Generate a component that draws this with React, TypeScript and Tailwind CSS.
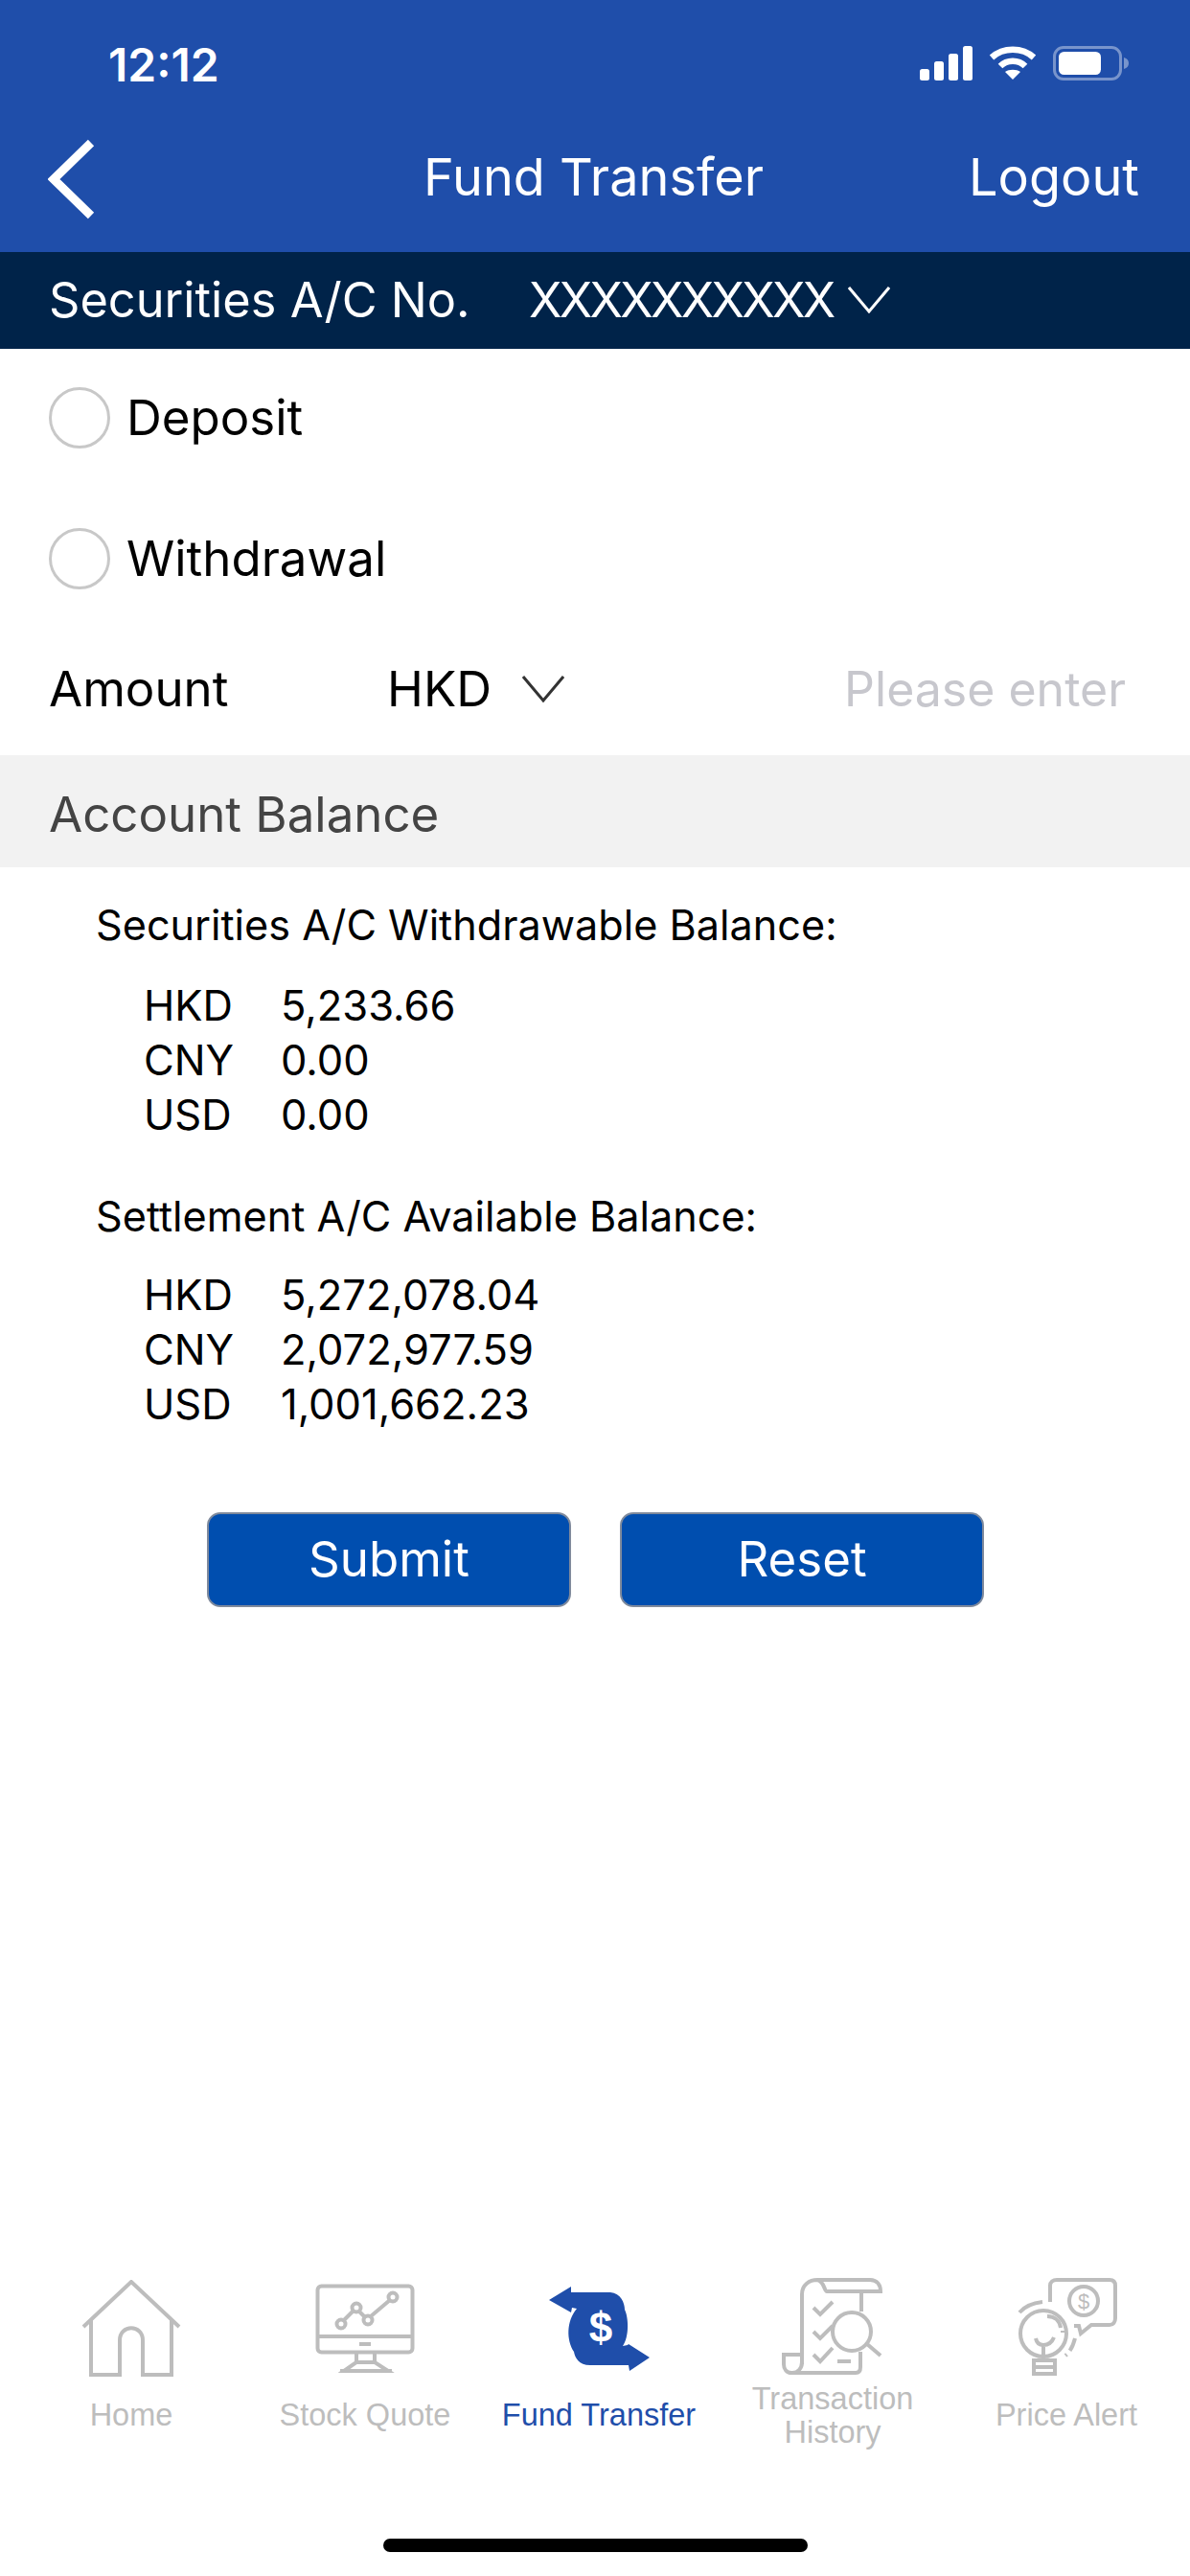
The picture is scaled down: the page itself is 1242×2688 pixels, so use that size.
const SANS = "font-['Inter','Liberation_Sans',sans-serif]";

function Chevron({ w, h, color }: { w: number; h: number; color: string }) {
  return (
    <svg width={w} height={h} viewBox="0 0 44 28" fill="none">
      <path d="M1 1 L22 26 L43 1" stroke={color} strokeWidth="3" />
    </svg>
  );
}

function Row({ cur, val }: { cur: string; val: string }) {
  return (
    <div className="flex h-[57px] items-center text-[43.5px] text-black">
      <span className="w-[143px]">{cur}</span>
      <span>{val}</span>
    </div>
  );
}

function Radio({ label }: { label: string }) {
  return (
    <div className="flex h-[64px] items-center gap-[17px]">
      <div className="size-[64px] rounded-full border-[3px] border-[#c8c8c8]" />
      <span className="text-[51px] leading-[64px] text-black">{label}</span>
    </div>
  );
}

function Tab({ label, active, children }: { label: string; active?: boolean; children: React.ReactNode }) {
  return (
    <div className="flex flex-col items-center">
      <div className="flex h-[104px] items-center justify-center">{children}</div>
      <div className={`mt-[4px] flex h-[70px] items-start justify-center text-center text-[32.5px] leading-[35px] font-['Liberation_Sans',sans-serif] ${active ? "text-[#1f4eaa]" : "text-[#bdbdbd]"}`}>
        <span className={label.length > 14 ? "" : "pt-[17px]"}>{label}</span>
      </div>
    </div>
  );
}

const G = "#bdbdbd";

export default function App() {
  return (
    <div className={`flex h-[2688px] w-[1242px] flex-col bg-white ${SANS}`}>
      <header className="h-[263px] shrink-0 bg-[#1f4eaa] text-white">
        <div className="flex h-[136px] items-start justify-between pt-[43px] pl-[113px] pr-[64px]">
          <span className="text-[48px] leading-[50px] font-semibold">12:12</span>
          <div className="flex items-center gap-[17px] pt-[5px]">
            <svg width="55" height="36" viewBox="0 0 55 36" fill="white">
              <rect x="0" y="24" width="10" height="12" rx="2.5" />
              <rect x="15" y="16" width="10" height="20" rx="2.5" />
              <rect x="30" y="8" width="10" height="28" rx="2.5" />
              <rect x="45" y="0" width="10" height="36" rx="2.5" />
            </svg>
            <svg width="50" height="36" viewBox="0 0 50 36" fill="none" stroke="white" strokeWidth="6.5">
              <path d="M3 12 C15 1 35 1 47 12" />
              <path d="M12 21 C19 14 31 14 38 21" />
              <path d="M25 35 L17 27 C21 24 29 24 33 27 Z" fill="white" stroke="none" />
            </svg>
            <svg width="79" height="36" viewBox="0 0 79 36" fill="none">
              <rect x="1.5" y="1.5" width="69" height="33" rx="9.5" stroke="white" strokeOpacity="0.4" strokeWidth="3" />
              <rect x="6" y="6" width="44" height="24" rx="5.5" fill="white" />
              <path d="M74 12 C77.5 13 79 15 79 18 C79 21 77.5 23 74 24 Z" fill="white" fillOpacity="0.4" />
            </svg>
          </div>
        </div>
        <div className="flex h-[127px] items-start pl-[50px] pr-[53px]">
          <div className="flex-1">
            <svg width="50" height="84" viewBox="0 0 50 84" fill="none" className="mt-[9px]">
              <path d="M45 4 L6 42 L45 80" stroke="white" strokeWidth="9" />
            </svg>
          </div>
          <span className="mt-[19px] text-[54px] leading-[60px]">Fund Transfer</span>
          <div className="flex flex-1 justify-end">
            <span className="mt-[19px] text-[54px] leading-[60px]">Logout</span>
          </div>
        </div>
      </header>

      <div className="flex h-[101px] shrink-0 items-center bg-[#002349] pb-[2px] pl-[51px] text-[50.5px] text-white">
        <span className="w-[501px]">Securities A/C No.</span>
        <span className="tracking-[-2.7px]">XXXXXXXXXX</span>
        <span className="ml-[16px]"><Chevron w={44} h={28} color="white" /></span>
      </div>

      <div className="flex h-[424px] shrink-0 flex-col px-[51px]">
        <div className="mt-[40px]"><Radio label="Deposit" /></div>
        <div className="mt-[83px]"><Radio label="Withdrawal" /></div>
        <div className="mt-[72px] flex h-[64px] items-center text-[51px] leading-[64px] text-black">
          <span className="w-[353px]">Amount</span>
          <span>HKD</span>
          <span className="ml-[32px]"><Chevron w={44} h={28} color="#333333" /></span>
          <span className="ml-auto pr-[16px] text-[50px] text-[#c7c7cd]">Please enter</span>
        </div>
      </div>

      <div className="flex h-[117px] shrink-0 items-center bg-[#f2f2f2] pl-[51px] pt-[8px] text-[51px] text-[#444444]">Account Balance</div>

      <div className="flex shrink-0 flex-col pl-[100px] pt-[32px]">
        <div className="text-[43.2px] leading-[57px] text-black">Securities A/C Withdrawable Balance:</div>
        <div className="mt-[27px] pl-[50px]">
          <Row cur="HKD" val="5,233.66" />
          <Row cur="CNY" val="0.00" />
          <Row cur="USD" val="0.00" />
        </div>
        <div className="mt-[49px] text-[43.2px] leading-[57px] text-black">Settlement A/C Available Balance:</div>
        <div className="mt-[25px] pl-[50px]">
          <Row cur="HKD" val="5,272,078.04" />
          <Row cur="CNY" val="2,072,977.59" />
          <Row cur="USD" val="1,001,662.23" />
        </div>
      </div>

      <div className="mt-[84px] flex shrink-0 justify-center gap-[51px] pl-[1px]">
        <button className="h-[99px] w-[380px] rounded-[14px] border-2 border-[#7f8a9c] bg-[#004eaf] text-[51px] text-white">Submit</button>
        <button className="h-[99px] w-[380px] rounded-[14px] border-2 border-[#7f8a9c] bg-[#004eaf] text-[51px] text-white">Reset</button>
      </div>

      <nav className="mt-auto grid shrink-0 grid-cols-5 pl-[15px] pr-[7px]">
        <Tab label="Home">
          <svg width="104" height="102" viewBox="0 0 104 102" fill="none" stroke={G} strokeWidth="4">
            <path d="M2 49 L52 2 L102 49" />
            <path d="M10 42 V99 H40 V63 C40 46 64 46 64 63 V99 H94 V42" />
          </svg>
        </Tab>
        <Tab label="Stock Quote">
          <svg width="104" height="94" viewBox="0 0 104 94" fill="none" stroke={G} strokeWidth="4">
            <rect x="2.5" y="2.5" width="99" height="69" rx="4" />
            <path d="M2.5 55 H101.5" />
            <path d="M46 63 H58" />
            <path d="M43 72 V82 L30 91 H76 L62 82 V72 M43 82 H62" />
            <path d="M26 91 H80" />
            <circle cx="27" cy="42" r="4.5" />
            <circle cx="43" cy="25" r="4.5" />
            <circle cx="55" cy="38" r="4.5" />
            <circle cx="81" cy="14" r="4.5" />
            <path d="M30 38 L40 28 M46 29 L52 35 M58 34 L78 17" />
          </svg>
        </Tab>
        <Tab label="Fund Transfer" active>
          <svg width="105" height="90" viewBox="13 15 105 90">
            <path fill="#1f4eaa" d="M13 30 L36 16 L36 22 L77 22 C88 23 92 33 92 40 C96 48 97 68 90 78 L95 77 L96 76 L118 90 L97 104 L96 98 L56 98 C44 98 40 90 39 84 C31 72 31 52 42 39 L37 38 L36 43 Z" />
            <text x="67" y="74" fill="white" fontSize="44" fontWeight="700" textAnchor="middle" fontFamily="Liberation Sans, sans-serif">$</text>
          </svg>
        </Tab>
        <Tab label="Transaction History">
          <svg width="120" height="110" viewBox="0 5 120 110" fill="none" stroke={G} strokeWidth="4">
            <path d="M44 9 H99 C107 9 110 15 110 21 H54 C51 21 52 11 44 9 C36 9 28 14 28 24 V97" />
            <path d="M90 21 V42" />
            <path d="M89 84 V100 C89 104 87 106 84 106 H17 C12 106 9 102 9 97 V87 H28 V95 C28 101 24 106 18 106" />
            <circle cx="80" cy="63" r="20" />
            <path d="M96 76 L110 88" />
            <path d="M40 38 L47 45 L60 32 M40 63 L47 70 L60 57 M40 87 L47 94 L60 80 M65 94 H79" />
          </svg>
        </Tab>
        <Tab label="Price Alert">
          <svg width="125" height="110" viewBox="0 5 125 110" fill="none" stroke={G} strokeWidth="4">
            <path d="M45 32 V15 C45 11 48 9 52 9 H107 C111 9 113 11 113 15 V49 C113 53 111 56 107 56 H88 L77 65 L75 57 H70" />
            <circle cx="80" cy="31" r="15" />
            <text x="80" y="39" fill={G} stroke="none" fontSize="22" textAnchor="middle" fontFamily="Liberation Sans, sans-serif">$</text>
            <path d="M13 43 C19 36 28 33 37 32" />
            <circle cx="38" cy="65" r="24" />
            <path d="M42 47 C50 47 55 52 56 59" />
            <path d="M58 62 V64" />
            <path d="M30 70 C31 75 34 77 38 77 C43 77 47 74 49 69 M38 77 V93" />
            <path d="M28 93 H50 V107 H28 Z M28 100 H50" />
            <path d="M71 70 C69 78 66 84 61 88" strokeDasharray="14 5" />
          </svg>
        </Tab>
      </nav>

      <div className="flex h-[132px] shrink-0 justify-center pt-[93px]">
        <div className="h-[14px] w-[443px] rounded-full bg-black" />
      </div>
    </div>
  );
}
